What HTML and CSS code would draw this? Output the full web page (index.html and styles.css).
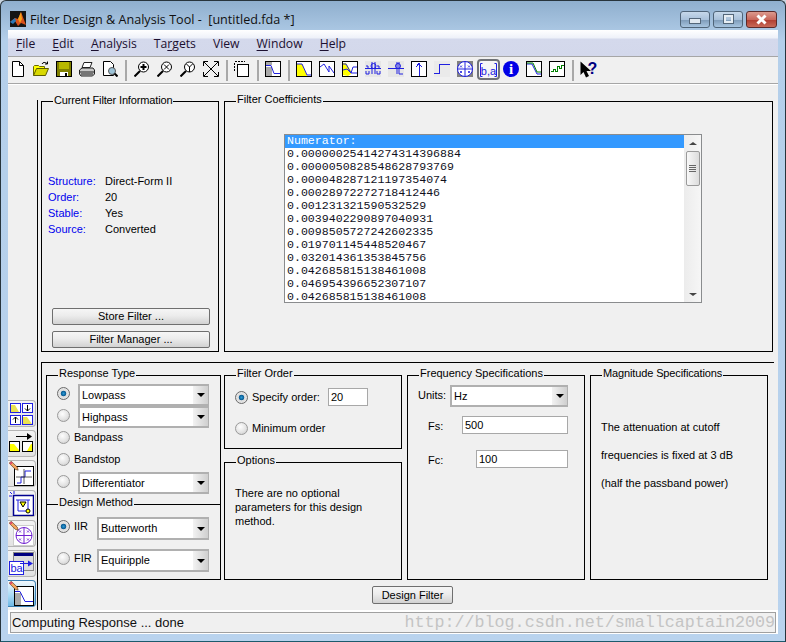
FILE: index.html
```html
<!DOCTYPE html>
<html lang="en">
<head>
  <meta charset="UTF-8">
  <title>Filter Design &amp; Analysis Tool</title>
  <link rel="stylesheet" href="styles.css">
</head>
<body>
  <svg class="defs" width="0" height="0">
    <symbol id="pencil" viewBox="0 0 12 12">
      <path d="M1 1.500 3 0.5 10 7.500 11 11 7.500 10 0.5 3z" fill="#f3a35c" stroke="#5a3a20" stroke-width=".8"/>
      <path d="M.5 3 3 .5 4.500 2 2 4.500z" fill="#e0476a"/>
    </symbol>
  </svg>
  <div class="window">
    <div class="titlebar">
      <svg class="logo" width="16" height="16" viewBox="0 0 16 16">
        <rect width="16" height="16" fill="#141414"/>
        <path d="M0 11 5 7 8 8 11 1 16 14 11 12 8 15 5 10z" fill="#d8501a"/>
        <path d="M8 8 11 1 12 8 10 12z" fill="#f7a21b"/>
        <path d="M0 11 5 7 6 10 3 13z" fill="#2a78b8"/>
      </svg>
      <span class="title">Filter Design &amp; Analysis Tool -&nbsp; [untitled.fda *]</span>
      <div class="caption-btns">
        <div class="caption-btn"><span class="glyph-min"></span></div>
        <div class="caption-btn"><span class="glyph-max"></span></div>
        <div class="caption-btn caption-close">
          <svg width="15" height="11" viewBox="0 0 15 11"><path d="M3.500 1.500 11.500 9.500M11.500 1.500 3.500 9.500" fill="none" stroke="#fff" stroke-width="3"/></svg>
        </div>
      </div>
    </div>

    <div class="client">
      <div class="menubar">
        <span class="menu"><u>F</u>ile</span>
        <span class="menu"><u>E</u>dit</span>
        <span class="menu"><u>A</u>nalysis</span>
        <span class="menu">Ta<u>r</u>gets</span>
        <span class="menu">View</span>
        <span class="menu"><u>W</u>indow</span>
        <span class="menu"><u>H</u>elp</span>
      </div>

      <div class="toolbar">
        <div class="tool"><svg width="16" height="16" viewBox="0 0 16 16"><path d="M2.500 .5h7l4 4v11h-11z" fill="#fff" stroke="#000"/><path d="M9.500 .5v4h4" fill="none" stroke="#000"/></svg></div>
        <div class="tool"><svg width="16" height="16" viewBox="0 0 16 16"><path d="M.5 14.500v-9l1-1h4l1 1h5v2" fill="#ff0" stroke="#6b6b00"/><path d="M.5 14.500 3.500 7.500h12l-3 7z" fill="#d8d800" stroke="#5c5c00"/><path d="M9 3C10 1 12 1 14 2.500M14.500 .5V3H12" fill="none" stroke="#000"/></svg></div>
        <div class="tool"><svg class="crisp" width="16" height="16" viewBox="0 0 16 16"><rect x=".5" y=".5" width="15" height="15" fill="#808000" stroke="#000"/><rect x="3" y="1" width="10" height="7" fill="#b8b800"/><rect x="4" y="11" width="8" height="4" fill="#fff"/><rect x="9" y="12" width="2" height="3" fill="#000"/></svg></div>
        <div class="tool"><svg width="16" height="16" viewBox="0 0 16 16"><path d="M5 1.500h8l-2 5H3z" fill="#fff" stroke="#222"/><path d="M3 7h11l1.500 2v4l-2 2H2L.5 13V9z" fill="#c8c8c8" stroke="#222"/><path d="M1 11h14M2 13h12" stroke="#222"/></svg></div>
        <div class="tool"><svg width="16" height="16" viewBox="0 0 16 16"><path d="M1.500 .5h7l3 3v11h-10z" fill="#fff" stroke="#000"/><circle cx="10" cy="10" r="3.500" fill="#9cc3d8" stroke="#555"/><path d="M12.500 12.500 15.500 15.500" stroke="#000" stroke-width="2"/></svg></div>
        <div class="tool-sep tool-sep--wide"></div>
        <div class="tool"><svg width="16" height="16" viewBox="0 0 16 16"><circle cx="9.500" cy="6" r="5" fill="#fff" stroke="#000"/><path d="M6 10 .5 15.500" stroke="#000" stroke-width="2"/><path d="M9.500 3v6M6.500 6h6" stroke="#000" stroke-width="2"/></svg></div>
        <div class="tool"><svg width="16" height="16" viewBox="0 0 16 16"><circle cx="9.500" cy="6" r="5" fill="#fff" stroke="#000"/><path d="M6 10 .5 15.500" stroke="#000" stroke-width="2"/><path d="M7 3.500 12 8.500M12 3.500 7 8.500" stroke="#000"/></svg></div>
        <div class="tool"><svg width="16" height="16" viewBox="0 0 16 16"><circle cx="9.500" cy="6" r="5" fill="#fff" stroke="#000"/><path d="M6 10 .5 15.500" stroke="#000" stroke-width="2"/><path d="M6.500 3 9.500 6 12.500 3M9.500 6V11" fill="none" stroke="#000"/></svg></div>
        <div class="tool"><svg width="16" height="16" viewBox="0 0 16 16"><path d="M1 1 15 15M15 1 1 15" stroke="#000"/><path d="M.5 5V.5H5M11 .5h4.500V5M15.500 11v4.500H11M5 15.500H.5V11" fill="none" stroke="#000"/></svg></div>
        <div class="tool-sep"></div>
        <div class="tool"><svg class="crisp" width="16" height="16" viewBox="0 0 16 16"><path d="M.5 9.500v-9h10" fill="none" stroke="#000" stroke-dasharray="2 1"/><rect x="3.500" y="3.500" width="11" height="12" fill="#fff" stroke="#000"/></svg></div>
        <div class="tool-sep"></div>
        <div class="tool"><svg width="16" height="16" viewBox="0 0 16 16"><rect x=".5" y=".5" width="15" height="15" fill="#fff" stroke="#000"/><rect x="1" y="6" width="6" height="9" fill="#aaa"/><rect x="1" y="1" width="6" height="3" fill="#aaa"/><path d="M1 4.500h5l3 8h6" fill="none" stroke="#2020e0"/></svg></div>
        <div class="tool-sep"></div>
        <div class="tool"><svg width="16" height="16" viewBox="0 0 16 16"><rect x=".5" y=".5" width="15" height="15" fill="#fff" stroke="#000"/><path d="M1 15V3h5l5 11v1z" fill="#ff0"/><path d="M1 3h5l5 11h4" fill="none" stroke="#2020e0"/></svg></div>
        <div class="tool"><svg width="16" height="16" viewBox="0 0 16 16"><rect x=".5" y=".5" width="15" height="15" fill="#fff" stroke="#000"/><path d="M1 6 5 3 10 11V5L15 12" fill="none" stroke="#2020e0"/></svg></div>
        <div class="tool"><svg width="16" height="16" viewBox="0 0 16 16"><rect x=".5" y=".5" width="15" height="15" fill="#fff" stroke="#000"/><path d="M1 14V2h3l5 8v3l-3 2z" fill="#ff0"/><path d="M1 3h3l5 9h6M1 9 5 8 9 12 11 6h4" fill="none" stroke="#2020e0"/></svg></div>
        <div class="tool"><svg width="16" height="16" viewBox="0 0 16 16"><rect width="16" height="16" fill="#e6e6e6"/><path d="M0 7.500h16M7 1v12M10 1v12M1 5h2v2M12 5h2v2M1 10v3h3v-3M12 10v3h3v-3" fill="none" stroke="#2020e0"/><circle cx="8.500" cy="5" r="2.500" fill="none" stroke="#2020e0"/></svg></div>
        <div class="tool"><svg width="16" height="16" viewBox="0 0 16 16"><rect width="16" height="16" fill="#e6e6e6"/><path d="M0 7.500h16M9 1v12M11 1v12M2 7.500h4M11 13h4" fill="none" stroke="#2020e0"/><circle cx="10" cy="5" r="2.500" fill="none" stroke="#2020e0"/></svg></div>
        <div class="tool"><svg class="crisp" width="16" height="16" viewBox="0 0 16 16"><rect x=".5" y=".5" width="15" height="15" fill="#fff" stroke="#000"/><path d="M8 14.500V3M8 2.500 5 6M8 2.500 11 6" fill="none" stroke="#2020e0"/></svg></div>
        <div class="tool"><svg class="crisp" width="16" height="16" viewBox="0 0 16 16"><rect width="16" height="16" fill="#eaeaea"/><path d="M0 12.500h5V3.500h11" fill="none" stroke="#2020e0" stroke-width="1"/></svg></div>
        <div class="tool"><svg width="16" height="16" viewBox="0 0 16 16"><rect width="16" height="16" fill="#808080"/><circle cx="8" cy="8" r="7.500" fill="#fff" stroke="#2020e0"/><path d="M.5 8h15M8 .5v15" stroke="#2020e0"/><path d="M3 4.500 5 6.500M5 4.500 3 6.500M11 4.500 13 6.500M13 4.500 11 6.500M3 10 5 12M5 10 3 12M11 10 13 12M13 10 11 12" stroke="#2020e0" stroke-width=".8"/></svg></div>
        <div class="tool tool--on"><svg width="19" height="16" viewBox="0 0 19 16"><path d="M3.500 1.500H1.500v13h2M15.500 1.500h2v13h-2" fill="none" stroke="#2020e0"/><text x="9.500" y="13" class="ba-text">b,a</text></svg></div>
        <div class="tool"><svg width="16" height="16" viewBox="0 0 16 16"><circle cx="8" cy="8" r="8" fill="#0000e6"/><text x="8" y="13" class="info-text">i</text></svg></div>
        <div class="tool"><svg width="16" height="16" viewBox="0 0 16 16"><rect x=".5" y=".5" width="15" height="15" fill="#fff" stroke="#000"/><path d="M1 3h5l5 10h4" fill="none" stroke="#2020e0"/><path d="M1 2h6l4 9h4" fill="none" stroke="#008000"/></svg></div>
        <div class="tool"><svg class="crisp" width="16" height="16" viewBox="0 0 16 16"><rect x=".5" y=".5" width="15" height="15" fill="#fff" stroke="#000"/><path d="M1.500 10.500h3v-2h2v2h2V5.500h2v2h2v-3h2" fill="none" stroke="#008000"/></svg></div>
        <div class="tool-sep"></div>
        <div class="tool"><svg width="18" height="17" viewBox="0 0 18 17"><path d="M.5 .5V14L3.500 11 6 16.500 9 15 6.500 10H11z" fill="#000"/><text x="12.500" y="13" class="help-text">?</text></svg></div>
      </div>

      <div class="main">
        <div class="sidebar">
          <div class="side-btn">
            <svg width="25" height="25" viewBox="0 0 25 25">
              <rect x="1.500" y="2.500" width="10" height="9" fill="#fff" stroke="#2020e0"/><path d="M2 4h4l4 7H2z" fill="#e8e050"/>
              <rect x="13.500" y="2.500" width="10" height="9" fill="#fff" stroke="#2020e0"/><path d="M18.500 4v6M16 7.500 18.500 10 21 7.500" fill="none" stroke="#000"/>
              <rect x="1.500" y="14.500" width="10" height="9" fill="#fff" stroke="#2020e0"/><path d="M6.500 22v-6M4 18.500 6.500 16 9 18.500" fill="none" stroke="#000"/>
              <rect x="13.500" y="14.500" width="10" height="9" fill="#fff" stroke="#2020e0"/><path d="M14 16h4l5 7h-9z" fill="#e8e050"/>
            </svg>
          </div>
          <div class="side-btn">
            <svg width="25" height="25" viewBox="0 0 25 25">
              <path d="M7 5.500h15" stroke="#000"/><path d="M18 2 23 5.500 18 9z" fill="#000"/>
              <rect x=".5" y="10.500" width="10" height="10" fill="#fff" stroke="#000"/><path d="M1 13h4l5 6v1H1z" fill="#ff0"/>
              <rect x="13.500" y="10.500" width="10" height="10" fill="#fff" stroke="#000"/><path d="M14 20h4l4-7h1v7z" fill="#ff0"/>
            </svg>
          </div>
          <div class="side-btn">
            <svg width="25" height="25" viewBox="0 0 25 25">
              <rect x="5.500" y="5.500" width="19" height="19" fill="#fff" stroke="#000"/>
              <path d="M8 22h4v-6h4v-6h6" fill="none" stroke="#2020e0"/><path d="M7 16h16M15 8v15" stroke="#333" stroke-width=".8"/>
              <use href="#pencil" x="0" y="0" width="10" height="10"/>
            </svg>
          </div>
          <div class="side-btn">
            <svg width="25" height="25" viewBox="0 0 25 25">
              <path d="M1 1 3 3M5 0v3M0 5h3" stroke="#2020e0"/>
              <rect x="4.500" y="4.500" width="20" height="20" fill="#fff" stroke="#000090" stroke-width="1.500"/>
              <path d="M7 9h14M9 9v11h10V9" fill="none" stroke="#2020e0"/><path d="M11 11h6l-3 5z" fill="#ff0" stroke="#000"/><circle cx="19" cy="20" r="2" fill="#ff0" stroke="#000"/>
            </svg>
          </div>
          <div class="side-btn">
            <svg width="25" height="25" viewBox="0 0 25 25">
              <rect x="4.500" y="4.500" width="20" height="20" fill="#fff" stroke="#ccc"/>
              <circle cx="15" cy="14.500" r="8" fill="#fff" stroke="#7020d0"/><path d="M7 14.500h16M15 6.500v16" stroke="#7020d0"/>
              <path d="M10 9.500 12 11.500M12 9.500 10 11.500M18 9.500 20 11.500M20 9.500 18 11.500M10 17.500 12 19.500M12 17.500 10 19.500M18 17.500 20 19.500M20 17.500 18 19.500" stroke="#7020d0" stroke-width=".8"/>
              <use href="#pencil" x="0" y="0" width="10" height="10"/>
            </svg>
          </div>
          <div class="side-btn">
            <svg width="25" height="25" viewBox="0 0 25 25">
              <rect x="4.500" y="1.500" width="20" height="18" fill="#ddd" stroke="#888"/><rect x="5" y="2" width="19" height="3" fill="#000080"/>
              <rect x=".5" y="10.500" width="14" height="13" fill="#fff" stroke="#2020e0"/><text x="7.500" y="21" class="ba-text">ba</text>
              <path d="M11 12.500h10" stroke="#2020e0"/><path d="M19 9.500 24 12.500 19 15.500z" fill="#2020e0"/>
            </svg>
          </div>
          <div class="side-btn side-btn--on">
            <svg width="25" height="25" viewBox="0 0 25 25">
              <rect x="5.500" y="5.500" width="19" height="19" fill="#fff" stroke="#000"/>
              <rect x="6" y="12" width="6" height="12" fill="#aaa"/><path d="M6 10.500h5l5 10h8" fill="none" stroke="#2020e0"/>
              <use href="#pencil" x="0" y="0" width="10" height="10"/>
            </svg>
          </div>
        </div>

        <div class="panes">
          <div class="upper">
            <div class="group group-info">
              <div class="group-title">Current Filter Information</div>
              <div class="info-grid">
                <span class="info-key">Structure:</span><span>Direct-Form II</span>
                <span class="info-key">Order:</span><span>20</span>
                <span class="info-key">Stable:</span><span>Yes</span>
                <span class="info-key">Source:</span><span>Converted</span>
              </div>
              <div class="info-btns">
                <div class="btn">Store Filter ...</div>
                <div class="btn">Filter Manager ...</div>
              </div>
            </div>
            <div class="group group-coefs">
              <div class="group-title">Filter Coefficients</div>
              <div class="listbox">
                <div class="list-rows">
                  <div class="list-row list-row--sel">Numerator:</div>
                  <div class="list-row">0.00000025414274314396884</div>
                  <div class="list-row">0.0000050828548628793769</div>
                  <div class="list-row">0.000048287121197354074</div>
                  <div class="list-row">0.00028972272718412446</div>
                  <div class="list-row">0.001231321590532529</div>
                  <div class="list-row">0.0039402290897040931</div>
                  <div class="list-row">0.0098505727242602335</div>
                  <div class="list-row">0.019701145448520467</div>
                  <div class="list-row">0.032014361353845756</div>
                  <div class="list-row">0.042685815138461008</div>
                  <div class="list-row">0.046954396652307107</div>
                  <div class="list-row">0.042685815138461008</div>
                </div>
                <div class="scrollbar">
                  <div class="scroll-up"></div>
                  <div class="scroll-thumb"><span></span><span></span><span></span><span></span></div>
                  <div class="scroll-down"></div>
                </div>
              </div>
            </div>
          </div>

          <div class="lower">
            <div class="lower-grid">
              <div class="group group-response">
                <div class="group-title">Response Type</div>
                <div class="response-list">
                  <div class="row"><span class="radio radio--on"></span><div class="select select--resp"><span>Lowpass</span><i class="drop"></i></div></div>
                  <div class="row"><span class="radio"></span><div class="select select--resp"><span>Highpass</span><i class="drop"></i></div></div>
                  <div class="row"><span class="radio"></span><span class="radio-label">Bandpass</span></div>
                  <div class="row"><span class="radio"></span><span class="radio-label">Bandstop</span></div>
                  <div class="row"><span class="radio"></span><div class="select select--resp"><span>Differentiator</span><i class="drop"></i></div></div>
                </div>
                <div class="method">
                  <div class="group-title">Design Method</div>
                  <div class="row row--method"><span class="radio radio--on"></span><span class="radio-label method-label">IIR</span><div class="select select--method"><span>Butterworth</span><i class="drop"></i></div></div>
                  <div class="row row--method"><span class="radio"></span><span class="radio-label method-label">FIR</span><div class="select select--method"><span>Equiripple</span><i class="drop"></i></div></div>
                </div>
              </div>

              <div class="col-mid">
                <div class="group group-order">
                  <div class="group-title">Filter Order</div>
                  <div class="order-row"><span class="radio radio--on"></span><span class="radio-label order-label">Specify order:</span><div class="field field--order">20</div></div>
                  <div class="order-row"><span class="radio"></span><span class="radio-label">Minimum order</span></div>
                </div>
                <div class="group group-options">
                  <div class="group-title">Options</div>
                  <p class="options-text">There are no optional<br>parameters for this design<br>method.</p>
                </div>
              </div>

              <div class="group group-freq">
                <div class="group-title">Frequency Specifications</div>
                <div class="freq-row freq-row--units"><span class="freq-label">Units:</span><div class="select select--units"><span>Hz</span><i class="drop"></i></div></div>
                <div class="freq-row freq-row--fs"><span>Fs:</span><div class="field field--fs">500</div></div>
                <div class="freq-row freq-row--fc"><span>Fc:</span><div class="field field--fc">100</div></div>
              </div>

              <div class="group group-mag">
                <div class="group-title">Magnitude Specifications</div>
                <p class="mag-text">The attenuation at cutoff<br>frequencies is fixed at 3 dB<br>(half the passband power)</p>
              </div>
            </div>
            <div class="btn btn--design">Design Filter</div>
          </div>
        </div>
      </div>

      <div class="statusbar">
        <span>Computing Response ... done</span>
        <span class="watermark">http://blog.csdn.net/smallcaptain2009</span>
      </div>
    </div>
  </div>
</body>
</html>
```

FILE: styles.css
```css
html, body {
  margin: 0;
  padding: 0;
  background: #c8d4e0;
}
.defs {
  position: absolute;
}
.window {
  width: 786px;
  height: 642px;
  box-sizing: border-box;
  border: 1px solid #27343c;
  border-bottom-color: #1d5a6c;
  border-radius: 6px 6px 0 0;
  background: linear-gradient(#8fafce 0, #b4cfea 40px, #b9d3ee 100%);
  padding: 0 7px 8px;
  font-family: "Liberation Sans", Arial, sans-serif;
  font-size: 11px;
  color: #000;
  overflow: hidden;
}

/* title bar */
.titlebar {
  height: 29px;
  display: flex;
  align-items: center;
  padding: 7px 0 0 2px;
  box-sizing: border-box;
}
.logo {
  flex: none;
}
.title {
  margin-left: 4px;
  font-family: "Open Sans", sans-serif;
  font-size: 12.6px;
  color: #111;
  white-space: nowrap;
}
.caption-btns {
  margin-left: auto;
  margin-right: 1px;
  display: flex;
  gap: 3px;
}
.caption-btn {
  width: 30px;
  height: 17px;
  box-sizing: border-box;
  border: 1px solid #4f6478;
  border-radius: 3px;
  background: linear-gradient(#c6d8ea 0, #a9c1da 50%, #7d9ab8 52%, #a8c5e0 100%);
  display: flex;
  align-items: center;
  justify-content: center;
}
.caption-close {
  width: 31px;
  border-color: #5c2a2a;
  background: linear-gradient(#dc9a8e 0, #c8685c 50%, #b03c30 52%, #c86a58 100%);
}
.glyph-min {
  width: 10px;
  height: 4px;
  margin-top: 4px;
  background: #dfe8f0;
  border: 1px solid #54677a;
}
.glyph-max {
  width: 9px;
  height: 8px;
  box-sizing: border-box;
  border: 2px solid #e6edf3;
  outline: 1px solid #54677a;
}

/* client area */
.client {
  height: 604px;
  background: #fff;
  display: flex;
  flex-direction: column;
}
.menubar {
  height: 26px;
  box-sizing: border-box;
  display: flex;
  align-items: center;
  padding: 0 0 0 8px;
  gap: 17px;
  background: linear-gradient(#fff 0, #eef1f9 8px, #d4d9ec 9px, #d3d8eb 100%);
  font-family: "Open Sans", sans-serif;
  font-size: 12.2px;
  color: #1c1030;
}
.menu u {
  text-underline-offset: 2px;
}
.toolbar {
  height: 28px;
  box-sizing: border-box;
  display: flex;
  align-items: center;
  background: #f0f0f0;
  border-top: 1px solid #a6a6a6;
  border-bottom: 1px solid #a6a6a6;
}
.tool {
  width: 23px;
  height: 22px;
  box-sizing: border-box;
  padding: 0 0 2px 3px;
  flex: none;
  display: flex;
  align-items: center;
}
.tool:first-child {
  margin-left: -1px;
}
.tool--on {
  height: 21px;
  margin-top: -1px;
  padding: 0;
  justify-content: center;
  border: 2px solid #6f7277;
  border-radius: 4px;
  background: #f6f6f6;
}
.tool-sep {
  width: 2px;
  height: 21px;
  flex: none;
  margin: 0 3px;
  background: #a8a8a8;
}
.tool-sep--wide {
  margin-right: 4px;
}
.crisp {
  shape-rendering: crispEdges;
}
.ba-text {
  font-family: "Liberation Sans", sans-serif;
  font-size: 11px;
  fill: #2020e0;
  text-anchor: middle;
}
.info-text {
  font-family: "Liberation Serif", serif;
  font-weight: bold;
  font-size: 15px;
  fill: #fff;
  text-anchor: middle;
}
.help-text {
  font-family: "Liberation Sans", sans-serif;
  font-weight: bold;
  font-size: 16px;
  fill: #000080;
  text-anchor: middle;
}

/* main area */
.main {
  height: 525px;
  margin-top: 1px;
  flex: none;
  display: flex;
  background: #f0f0f0;
}
.sidebar {
  width: 29px;
  flex: none;
  display: flex;
  flex-direction: column;
  justify-content: flex-end;
  gap: 3px;
  padding-bottom: 3px;
  box-sizing: border-box;
}
.side-btn {
  width: 28px;
  height: 27px;
  box-sizing: border-box;
  border: 1px solid #b4b4b4;
  border-left: none;
  border-radius: 0 4px 4px 0;
  background: linear-gradient(#f4f4f4, #e2e2e2);
  display: flex;
  align-items: center;
  justify-content: flex-end;
  padding-right: 1px;
}
.side-btn--on {
  border-color: #3c7fb1;
  background: linear-gradient(#f2f8fc, #a7d9f5 60%, #6fb8e4);
}
.panes {
  flex: 1;
  margin-top: 15px;
  padding: 1px 0 0 3px;
  border-left: 1px solid #000;
  min-width: 0;
}
.upper {
  display: flex;
  gap: 5px;
  height: 251px;
}
.group {
  position: relative;
  box-sizing: border-box;
  border: 1px solid #000;
}
.group-title {
  position: absolute;
  top: -10px;
  left: 11px;
  padding: 0 1px;
  line-height: 14px;
  background: #f0f0f0;
  white-space: nowrap;
}
.group-info .group-title {
  top: -9px;
  letter-spacing: -.15px;
}
.group-mag .group-title {
  letter-spacing: -.13px;
}
.group-info {
  width: 178px;
  display: flex;
  flex-direction: column;
  padding: 71px 0 3px 6px;
}
.info-grid {
  display: grid;
  grid-template-columns: 57px 1fr;
  grid-auto-rows: 16px;
  line-height: 16px;
}
.info-key {
  color: #0000ee;
}
.info-btns {
  margin-top: auto;
  margin-left: 4px;
  display: flex;
  flex-direction: column;
  gap: 6px;
}
.btn {
  width: 158px;
  height: 17px;
  box-sizing: border-box;
  border: 1px solid #6f6f6f;
  border-radius: 2px;
  background: linear-gradient(#f6f6f6 0, #ececec 45%, #d2d2d2 100%);
  line-height: 15px;
  text-align: center;
}
.group-coefs {
  width: 549px;
  padding: 32px 0 0 59px;
}

/* listbox */
.listbox {
  width: 418px;
  height: 169px;
  box-sizing: border-box;
  border: 1px solid #8a8c8e;
  background: #fff;
  display: flex;
}
.list-rows {
  flex: 1;
  font-family: "Liberation Mono", "Courier New", monospace;
  font-size: 11.6px;
  line-height: 12px;
  color: #10101c;
}
.list-row {
  height: 13px;
  padding-left: 2px;
}
.list-row:last-child {
  height: 11px;
}
.list-row--sel {
  background: #3399ff;
  color: #fff;
}
.scrollbar {
  width: 17px;
  flex: none;
  background: linear-gradient(90deg, #ececec, #f6f6f6);
  display: flex;
  flex-direction: column;
  align-items: center;
}
.scroll-up {
  width: 0;
  margin: 7px 0 6px;
  border: 4px solid transparent;
  border-top: none;
  border-bottom: 3px solid #444;
}
.scroll-thumb {
  width: 14px;
  height: 35px;
  box-sizing: border-box;
  border: 1px solid #9a9a9a;
  border-radius: 2px;
  background: linear-gradient(90deg, #f8f8f8, #dcdcdc);
  display: flex;
  flex-direction: column;
  justify-content: center;
  align-items: center;
  gap: 1px;
}
.scroll-thumb span {
  width: 7px;
  height: 1px;
  background: #666;
}
.scroll-down {
  width: 0;
  margin-top: auto;
  margin-bottom: 6px;
  border: 4px solid transparent;
  border-bottom: none;
  border-top: 3px solid #444;
}

/* lower half */
.lower {
  width: 733px;
  height: 248px;
  box-sizing: border-box;
  margin-top: 10px;
  border-top: 1px solid #000;
  border-left: 1px solid #000;
  padding: 12px 0 0 4px;
}
.lower-grid {
  display: flex;
  gap: 5px;
  height: 205px;
}
.group-response {
  width: 175px;
  flex: none;
}
.col-mid {
  width: 178px;
  flex: none;
  margin-left: -2px;
  display: flex;
  flex-direction: column;
  gap: 13px;
}
.group-freq,
.group-mag {
  width: 178px;
  flex: none;
}
.response-list {
  padding: 8px 0 0 10px;
}
.row {
  height: 22px;
  display: flex;
  align-items: center;
}
.response-list .radio {
  margin-bottom: 3px;
}
.response-list .radio-label {
  margin-bottom: 4px;
}
.radio {
  width: 13px;
  height: 13px;
  flex: none;
  box-sizing: border-box;
  border: 1px solid #9a9a9a;
  border-radius: 50%;
  background: radial-gradient(circle at 40% 35%, #fdfdfd 0, #e4e4e4 55%, #c4c4c4 100%);
}
.radio--on {
  background: radial-gradient(circle, #2a9ad4 0, #0a5a92 32%, #dcdcdc 40%, #f0f0f0 100%);
  border-color: #6a6a6a;
}
.radio-label {
  margin-left: 4px;
}
.select {
  position: relative;
  box-sizing: border-box;
  border: 2px solid #b0b0b0;
  border-right-width: 1px;
  background: #fff;
  display: flex;
  align-items: center;
  padding-left: 2px;
}
.select--resp {
  width: 131px;
  height: 22px;
  margin-left: 8px;
}
.select--method {
  width: 112px;
  height: 23px;
  padding-bottom: 2px;
}
.select--method .drop {
  margin-bottom: -2px;
}
.select--units {
  width: 118px;
  height: 22px;
}
.drop {
  margin-left: auto;
  width: 15px;
  align-self: stretch;
  background: linear-gradient(90deg, #f2f2f2, #cfcfcf);
  display: flex;
  align-items: center;
  justify-content: center;
}
.drop::after {
  content: "";
  border: 4px solid transparent;
  border-bottom: none;
  border-top: 4px solid #000;
}
.method {
  position: relative;
  margin-top: 10px;
  padding: 12px 0 0 10px;
  border-top: 1px solid #000;
}
.row--method {
  height: 23px;
  margin-bottom: 9px;
  align-items: flex-start;
}
.row--method .radio {
  margin-top: 3px;
}
.method-label {
  width: 23px;
  flex: none;
  line-height: 18px;
}
.group-order {
  height: 74px;
  flex: none;
  padding: 12px 0 0 10px;
}
.order-row {
  height: 18px;
  display: flex;
  align-items: center;
  margin-bottom: 13px;
}
.order-label {
  width: 76px;
  margin-left: 4px;
  flex: none;
}
.field {
  height: 18px;
  box-sizing: border-box;
  border: 1px solid #a8a8a8;
  background: #fff;
  line-height: 16px;
  padding-left: 2px;
}
.field--order {
  width: 40px;
}
.field--fs {
  width: 106px;
}
.field--fc {
  width: 92px;
}
.group-options {
  flex: 1;
  padding: 23px 0 0 10px;
}
.options-text {
  margin: 0;
  line-height: 14px;
}
.group-freq {
  padding: 9px 16px 0 10px;
}
.freq-row {
  display: flex;
  align-items: center;
  justify-content: space-between;
}
.freq-label {
  padding-bottom: 2px;
}
.freq-row--fs {
  margin-top: 9px;
  padding-left: 10px;
}
.freq-row--fc {
  margin-top: 16px;
  padding-left: 10px;
}
.freq-row--fs > span,
.freq-row--fc > span {
  padding-top: 2px;
}
.group-mag {
  padding: 37px 0 0 10px;
}
.mag-text {
  margin: 0;
  line-height: 28px;
}
.btn--design {
  width: 81px;
  height: 18px;
  margin: 6px 0 0 326px;
  line-height: 16px;
}

/* status */
.statusbar {
  position: relative;
  height: 21px;
  margin: 2px 2px 0;
  box-sizing: border-box;
  border: 1px solid #a0a0a0;
  background: #f0f0f0;
  padding-left: 1px;
  font-size: 13px;
  line-height: 19px;
  color: #111;
}
.watermark {
  position: absolute;
  right: 0;
  top: -1px;
  font-family: "Liberation Mono", monospace;
  font-size: 16.7px;
  line-height: 21px;
  color: #c4c4c4;
  white-space: nowrap;
}
```
